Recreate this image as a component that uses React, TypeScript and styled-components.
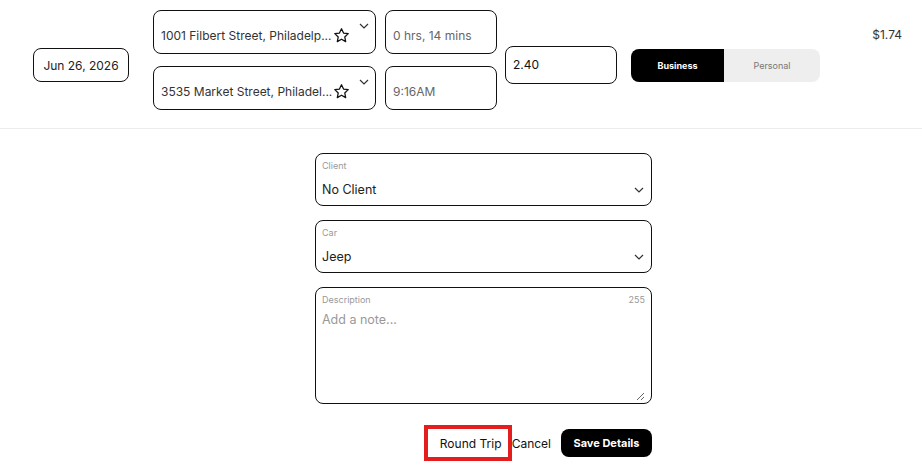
import React from "react";
import styled, { createGlobalStyle } from "styled-components";

const GlobalStyle = createGlobalStyle`
  body {
    margin: 0;
    background: #ffffff;
    font-family: Inter, "Noto Sans", sans-serif;
    color: #1a1a1a;
  }
`;

const Page = styled.div`
  width: 922px;
  height: 468px;
  overflow: hidden;
`;

const TopRow = styled.div`
  display: flex;
  align-items: center;
  padding: 10px 20px 18px 33px;
  border-bottom: 1px solid #ececec;
`;

const Box = styled.div<{ $w: number; $h: number; $ml?: number }>`
  box-sizing: border-box;
  width: ${(p) => p.$w}px;
  height: ${(p) => p.$h}px;
  margin-left: ${(p) => p.$ml || 0}px;
  border: 1px solid #111;
  border-radius: 8px;
  display: flex;
  align-items: center;
  font-size: 12px;
`;

const DateBox = styled(Box)`
  justify-content: center;
  color: #222;
  margin-top: 10px;
`;

const Column = styled.div<{ $ml: number }>`
  display: flex;
  flex-direction: column;
  gap: 12px;
  margin-left: ${(p) => p.$ml}px;
`;

const AddressBox = styled(Box)`
  padding: 6px 6px 0 7px;
  color: #333;
`;

const AddressText = styled.span`
  white-space: nowrap;
`;

const Chevron = styled.svg<{ $top?: boolean }>`
  margin-left: auto;
  align-self: ${(p) => (p.$top ? "flex-start" : "center")};
  margin-top: ${(p) => (p.$top ? "6px" : "0")};
  margin-right: ${(p) => (p.$top ? "0" : "1px")};
  flex-shrink: 0;
`;

const TimeBox = styled(Box)`
  padding: 6px 0 0 7px;
  color: #666;
`;

const DistanceBox = styled(Box)`
  padding: 0 7px 2px;
  color: #111;
  margin-top: 10px;
`;

const Toggle = styled.div`
  display: flex;
  margin-left: 14px;
  margin-top: 10px;
  height: 33px;
  border-radius: 8px;
  overflow: hidden;
  font-size: 9px;
`;

const Segment = styled.div<{ $active?: boolean; $w: number }>`
  width: ${(p) => p.$w}px;
  display: flex;
  align-items: center;
  justify-content: center;
  background: ${(p) => (p.$active ? "#000" : "#eeeeee")};
  color: ${(p) => (p.$active ? "#fff" : "#777")};
  font-weight: ${(p) => (p.$active ? 700 : 400)};
`;

const Price = styled.div`
  margin-left: auto;
  align-self: flex-start;
  margin-top: 17px;
  font-size: 12px;
  color: #333;
`;

const Form = styled.div`
  width: 337px;
  margin-left: 315px;
  padding-top: 24px;
  display: flex;
  flex-direction: column;
  gap: 14px;
`;

const Field = styled.div<{ $h: number }>`
  box-sizing: border-box;
  height: ${(p) => p.$h}px;
  border: 1px solid #111;
  border-radius: 8px;
  padding: 6px 6px 0 6px;
  display: flex;
  flex-direction: column;
`;

const FieldHead = styled.div`
  display: flex;
  justify-content: space-between;
  font-size: 9px;
  color: #999;
  height: 12px;
`;

const FieldBody = styled.div`
  display: flex;
  align-items: center;
  font-size: 12.5px;
  color: #222;
  margin-top: 10px;
`;

const Note = styled.textarea`
  flex: 1;
  border: none;
  outline: none;
  padding: 0;
  margin: 6px 0 2px;
  font-family: Inter, "Noto Sans", sans-serif;
  font-size: 12.5px;
  color: #222;
  resize: vertical;
  &::placeholder {
    color: #999;
  }
`;

const Actions = styled.div`
  display: flex;
  justify-content: flex-end;
  align-items: center;
  margin-top: 7px;
`;

const RoundTrip = styled.button`
  box-sizing: border-box;
  width: 88px;
  height: 36px;
  border: 4px solid #e41e1e;
  background: #fff;
  font-family: inherit;
  font-size: 12px;
  color: #111;
  padding: 0 0 0 6px;
`;

const TextButton = styled.button`
  border: none;
  background: none;
  padding: 0;
  font-family: inherit;
  font-size: 12px;
  color: #111;
`;

const SaveButton = styled.button`
  margin-left: 10px;
  width: 91px;
  height: 28px;
  border: none;
  border-radius: 8px;
  background: #000;
  color: #fff;
  font-family: inherit;
  font-size: 11px;
  font-weight: 700;
`;

const StarIcon = () => (
  <svg width="17" height="17" viewBox="0 0 24 24" fill="none" stroke="#111" strokeWidth="1.8" strokeLinejoin="round" style={{ marginLeft: 1, flexShrink: 0 }}>
    <path d="M12 2.5l2.9 6.1 6.6.8-4.9 4.6 1.3 6.6L12 17.3l-5.9 3.3 1.3-6.6-4.9-4.6 6.6-.8z" />
  </svg>
);

const ChevronIcon = ({ top }: { top?: boolean }) => (
  <Chevron $top={top} width="10" height="6" viewBox="0 0 10 6" fill="none" stroke="#333" strokeWidth="1.2">
    <path d="M1 1l4 4 4-4" />
  </Chevron>
);

const App = () => {
  return (
    <Page>
      <GlobalStyle />
      <TopRow>
        <DateBox $w={96} $h={34}>Jun 26, 2026</DateBox>
        <Column $ml={24}>
          <AddressBox $w={223} $h={44}>
            <AddressText>1001 Filbert Street, Philadelp...</AddressText>
            <StarIcon />
            <ChevronIcon top />
          </AddressBox>
          <AddressBox $w={223} $h={44}>
            <AddressText>3535 Market Street, Philadel...</AddressText>
            <StarIcon />
            <ChevronIcon top />
          </AddressBox>
        </Column>
        <Column $ml={9}>
          <TimeBox $w={112} $h={44}>0 hrs, 14 mins</TimeBox>
          <TimeBox $w={112} $h={44}>9:16AM</TimeBox>
        </Column>
        <DistanceBox $w={112} $h={38} $ml={8}>2.40</DistanceBox>
        <Toggle>
          <Segment $active $w={93}>Business</Segment>
          <Segment $w={96}>Personal</Segment>
        </Toggle>
        <Price>$1.74</Price>
      </TopRow>

      <Form>
        <Field $h={53}>
          <FieldHead>Client</FieldHead>
          <FieldBody>
            No Client
            <ChevronIcon />
          </FieldBody>
        </Field>
        <Field $h={53}>
          <FieldHead>Car</FieldHead>
          <FieldBody>
            Jeep
            <ChevronIcon />
          </FieldBody>
        </Field>
        <Field $h={117}>
          <FieldHead>
            <span>Description</span>
            <span>255</span>
          </FieldHead>
          <Note placeholder="Add a note..." />
        </Field>
        <Actions>
          <RoundTrip>Round Trip</RoundTrip>
          <TextButton>Cancel</TextButton>
          <SaveButton>Save Details</SaveButton>
        </Actions>
      </Form>
    </Page>
  );
};

export default App;
